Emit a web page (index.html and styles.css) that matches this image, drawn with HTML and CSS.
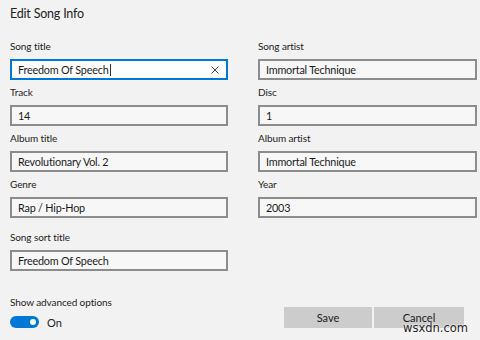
FILE: index.html
```html
<!DOCTYPE html>
<html lang="en">
<head>
    <meta charset="UTF-8">
    <title>Edit Song Info</title>
    <link rel="stylesheet" href="styles.css">
</head>
<body>
    <div class="dialog">
        <h1 class="dialog-title">Edit Song Info</h1>

        <div class="fields">
            <div class="field">
                <label class="field-label">Song title</label>
                <div class="field-box active">
                    <span class="field-value">Freedom Of Speech</span><span class="caret"></span>
                    <svg class="clear-icon" width="8" height="8" viewBox="0 0 8 8">
                        <path d="M0.5 0.5 L7.5 7.5 M7.5 0.5 L0.5 7.5" stroke="#444" stroke-width="1" fill="none"/>
                    </svg>
                </div>
            </div>
            <div class="field">
                <label class="field-label">Song artist</label>
                <div class="field-box"><span class="field-value">Immortal Technique</span></div>
            </div>

            <div class="field">
                <label class="field-label">Track</label>
                <div class="field-box"><span class="field-value">14</span></div>
            </div>
            <div class="field">
                <label class="field-label">Disc</label>
                <div class="field-box"><span class="field-value">1</span></div>
            </div>

            <div class="field">
                <label class="field-label">Album title</label>
                <div class="field-box"><span class="field-value">Revolutionary Vol. 2</span></div>
            </div>
            <div class="field">
                <label class="field-label">Album artist</label>
                <div class="field-box"><span class="field-value">Immortal Technique</span></div>
            </div>

            <div class="field">
                <label class="field-label">Genre</label>
                <div class="field-box"><span class="field-value">Rap / Hip-Hop</span></div>
            </div>
            <div class="field">
                <label class="field-label">Year</label>
                <div class="field-box"><span class="field-value">2003</span></div>
            </div>

            <div class="field sort-field">
                <label class="field-label">Song sort title</label>
                <div class="field-box"><span class="field-value">Freedom Of Speech</span></div>
            </div>
        </div>

        <div class="footer">
            <div class="advanced">
                <div class="field-label">Show advanced options</div>
                <div class="toggle-row">
                    <span class="toggle"><span class="toggle-knob"></span></span>
                    <span class="toggle-text">On</span>
                </div>
            </div>
            <div class="buttons">
                <button class="btn btn-save">Save</button>
                <button class="btn btn-cancel">Cancel</button>
            </div>
        </div>
    </div>

    <div class="watermark">wsxdn.com</div>
</body>
</html>
```

FILE: styles.css
```css
html, body {
    margin: 0;
    padding: 0;
    background-color: #f2f2f2;
}
body {
    font-family: Lato, "Noto Sans", Arial, sans-serif;
    color: #1a1a1a;
    width: 480px;
    height: 340px;
    overflow: hidden;
    position: relative;
}
.dialog {
    padding: 4px 3px 0 10px;
}
.dialog-title {
    margin: 0 0 14px 0;
    font-size: 12.5px;
    letter-spacing: -0.2px;
    font-weight: normal;
    line-height: 20px;
    color: #222;
}
.fields {
    display: grid;
    grid-template-columns: 218px 219px;
    column-gap: 30px;
}
.field {
    margin-bottom: 4px;
}
.sort-field {
    margin-top: 7px;
}
.field-label {
    display: block;
    font-size: 10px;
    letter-spacing: -0.1px;
    line-height: 16px;
    height: 16px;
    margin-bottom: 5px;
    color: #222;
}
.field-box {
    box-sizing: border-box;
    height: 21px;
    border: 2px solid #8c8c8c;
    background-color: #f7f7f7;
    display: flex;
    align-items: center;
    padding-left: 6px;
    padding-right: 6px;
}
.field-box.active {
    border-color: #0078d7;
    background-color: #fff;
}
.field-value {
    font-size: 10.8px;
    letter-spacing: -0.2px;
    color: #1a1a1a;
    white-space: nowrap;
}
.caret {
    display: inline-block;
    width: 1px;
    height: 12px;
    background-color: #333;
    margin-left: 1px;
}
.clear-icon {
    margin-left: auto;
    margin-right: 1px;
}
.footer {
    display: flex;
    justify-content: space-between;
    align-items: flex-end;
    margin-top: 19px;
    padding-right: 13px;
}
.advanced .field-label {
    margin-bottom: 5px;
}
.toggle-row {
    display: flex;
    align-items: center;
    height: 14px;
    margin-bottom: 4px;
}
.toggle {
    box-sizing: border-box;
    width: 29px;
    height: 12px;
    border-radius: 6px;
    background-color: #0078d7;
    display: flex;
    align-items: center;
    justify-content: flex-end;
    padding-right: 3px;
}
.toggle-knob {
    width: 6px;
    height: 6px;
    border-radius: 50%;
    background-color: #fff;
}
.toggle-text {
    margin-left: 8px;
    font-size: 11px;
    color: #222;
}
.buttons {
    display: flex;
    gap: 2px;
    margin-bottom: 5px;
}
.btn {
    height: 21px;
    border: none;
    background-color: #cccccc;
    font-family: inherit;
    font-size: 11px;
    color: #1a1a1a;
    padding: 0;
}
.btn-save {
    width: 88px;
}
.btn-cancel {
    width: 90px;
}
.watermark {
    position: absolute;
    right: 12px;
    bottom: 5px;
    font-family: "DejaVu Sans", sans-serif;
    font-size: 11.5px;
    line-height: 13px;
    color: #222;
    text-shadow: 0 0 2px #fff, 0 0 2px #fff;
}
```
